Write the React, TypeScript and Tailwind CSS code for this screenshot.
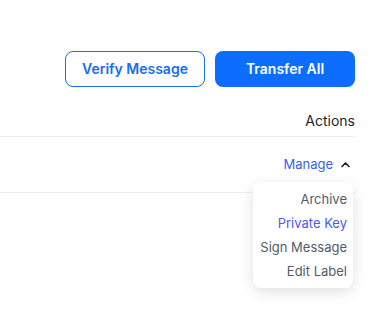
export default function App() {
  return (
    <div className="min-h-screen bg-white font-['Inter',sans-serif] pr-[21px] pt-[51px]">
      {/* Top actions */}
      <div className="flex justify-end gap-[10px]">
        <button className="h-9 w-[140px] rounded-lg border border-[#1a6cf2] text-sm font-semibold text-[#1a6cf2]">
          Verify Message
        </button>
        <button className="h-9 w-[140px] rounded-lg bg-[#0d6efd] text-sm font-semibold text-white">
          Transfer All
        </button>
      </div>

      {/* Table */}
      <div className="mt-[18px]">
        <div className="flex h-[32px] items-center justify-end border-b border-[#eceef1] text-sm text-[#1f2328]">
          Actions
        </div>
        <div className="relative flex h-[56px] items-center justify-end border-b border-[#eceef1]">
          <div className="flex items-center gap-[7px] pr-[4px]">
            <span className="text-[13px] text-[#3463e8]">Manage</span>
            <svg width="11" height="10" viewBox="0 0 11 10" fill="none">
              <path d="M2 6.5 5.5 3 9 6.5" stroke="#1f2328" strokeWidth="1.7" strokeLinecap="round" strokeLinejoin="round" />
            </svg>
          </div>
          <div className="absolute right-[2px] top-[45px] z-10 flex w-[100px] flex-col items-end rounded-lg bg-white py-[5px] pr-[6px] text-[13px] shadow-[0_4px_14px_rgba(0,0,0,0.12)]">
            <span className="leading-6 text-[#555b66]">Archive</span>
            <span className="leading-6 text-[#4a5ae8]">Private Key</span>
            <span className="leading-6 text-[#555b66]">Sign Message</span>
            <span className="leading-6 text-[#555b66]">Edit Label</span>
          </div>
        </div>
      </div>
    </div>
  );
}
